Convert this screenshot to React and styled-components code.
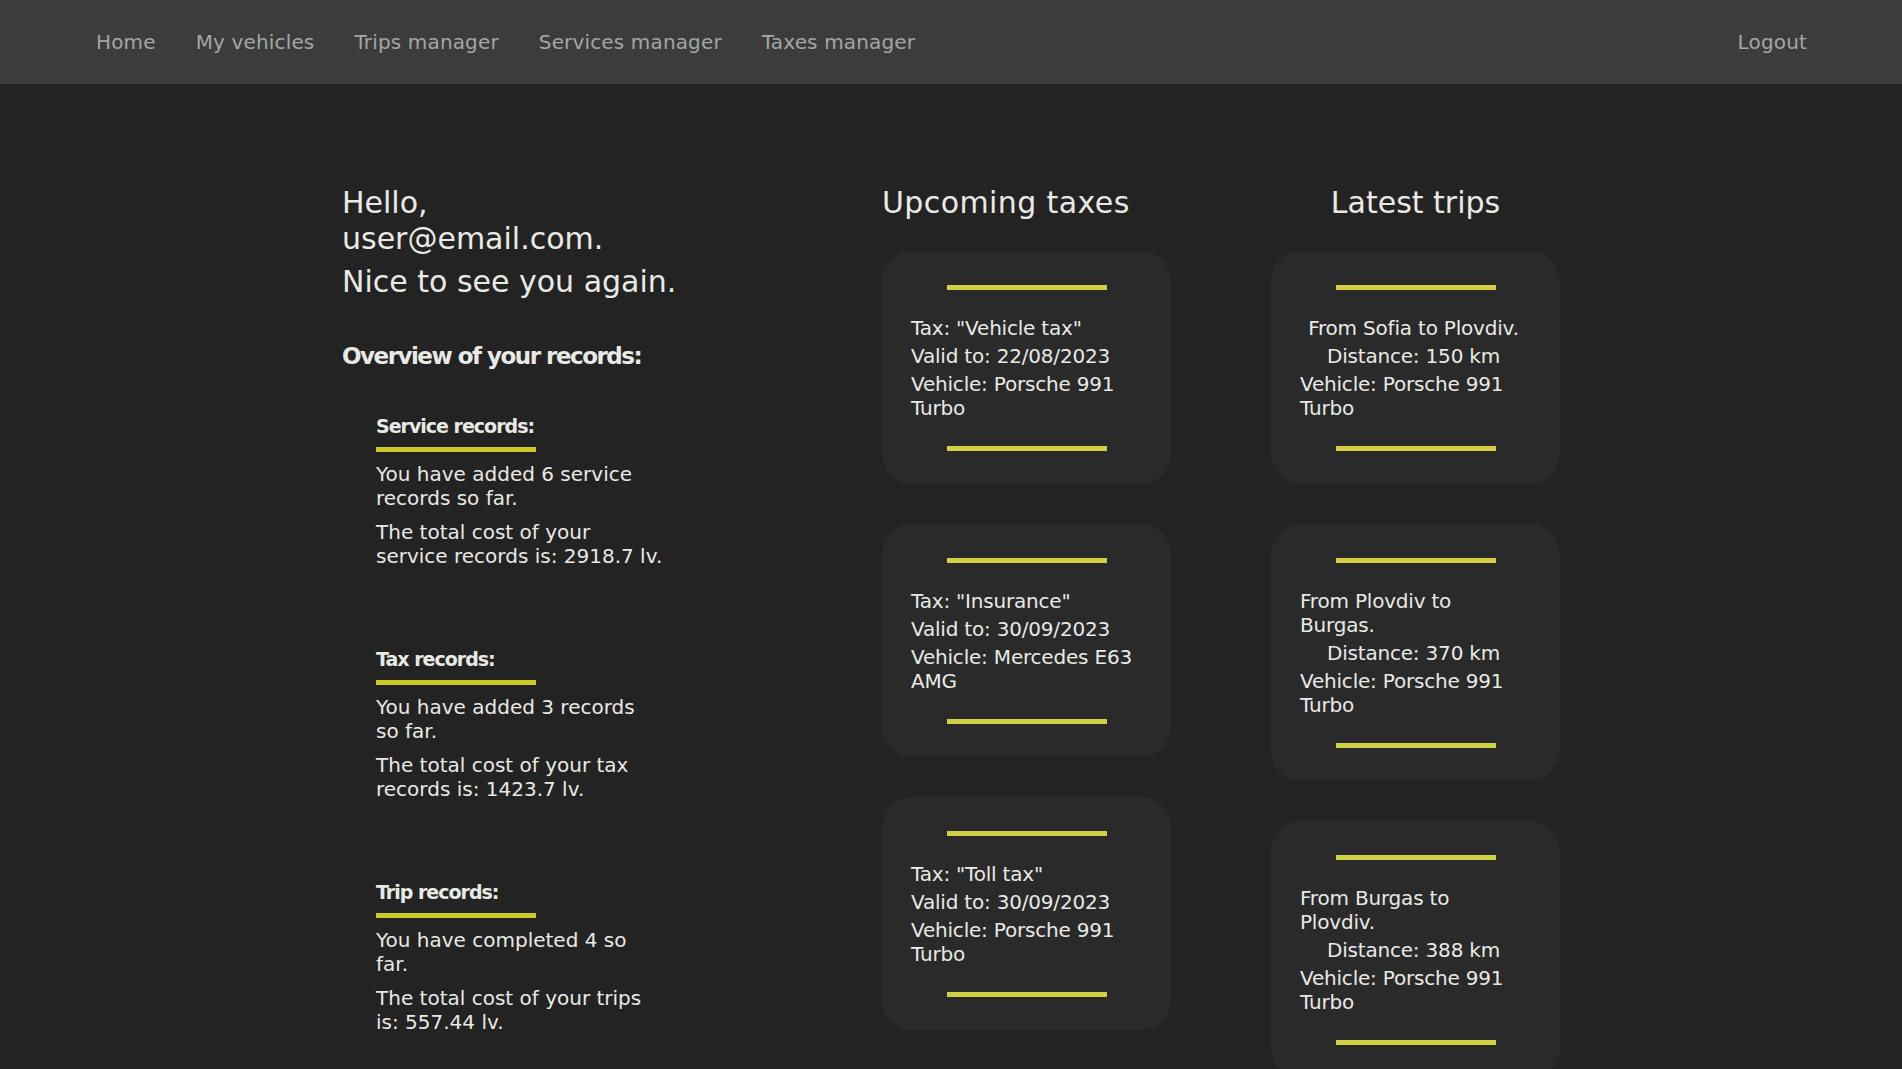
import React from 'react';
import styled, { createGlobalStyle } from 'styled-components';

const GlobalStyle = createGlobalStyle`
  html, body {
    margin: 0;
    padding: 0;
    background: #232323;
    font-family: "DejaVu Sans", "Liberation Sans", sans-serif;
    overflow-x: hidden;
  }
  ::-webkit-scrollbar {
    display: none;
  }
  * {
    box-sizing: border-box;
  }
`;

const Nav = styled.nav`
  height: 84px;
  background: #3c3c3a;
  display: flex;
  align-items: center;
  justify-content: space-between;
  padding: 0 75px 0 76px;
`;

const NavGroup = styled.div`
  display: flex;
  align-items: center;
`;

const NavLink = styled.a`
  color: #a3a6a8;
  font-size: 20px;
  line-height: 24px;
  letter-spacing: 0.15px;
  padding: 0 20px;
  text-decoration: none;
  cursor: pointer;
`;

const Main = styled.main`
  display: grid;
  grid-template-columns: 440px 289px 289px;
  column-gap: 100px;
  justify-content: center;
  padding: 101px 0 60px;
  color: #e9e9e6;
`;

const Column = styled.section`
  display: flex;
  flex-direction: column;
`;

const Greeting = styled.h1`
  font-size: 30px;
  font-weight: 400;
  line-height: 36px;
  margin: 0;
  max-width: 345px;
`;

const SubGreeting = styled.h2`
  font-size: 30px;
  font-weight: 400;
  line-height: 36px;
  margin: 7px 0 0;
`;

const Overview = styled.h3`
  font-size: 23px;
  font-weight: 700;
  letter-spacing: -1.5px;
  line-height: 28px;
  margin: 42px 0 0;
`;

const RecordList = styled.div`
  display: flex;
  flex-direction: column;
  gap: 79px;
  margin-top: 44px;
  padding-left: 34px;
`;

const Record = styled.div`
  width: 276px;
`;

const RecordTitle = styled.h4`
  font-size: 19px;
  font-weight: 700;
  letter-spacing: -1px;
  line-height: 24px;
  margin: 0;
`;

const Bar = styled.div`
  width: 160px;
  height: 5px;
  background: ${(p) => (p.$card ? '#d0d047' : '#c9c927')};
  margin: ${(p) => (p.$card ? '0 auto' : '9px 0 2px')};
`;

const RecordText = styled.p`
  font-size: 20px;
  line-height: 24px;
  margin: 10px 0 0;
`;

const Total = styled.span`
  white-space: nowrap;
`;

const ColumnTitle = styled.h2`
  font-size: 30px;
  font-weight: 400;
  line-height: 36px;
  letter-spacing: ${(p) => p.$spacing || '0'};
  margin: 0 0 30px;
  text-align: ${(p) => p.$align || 'left'};
`;

const CardStack = styled.div`
  display: flex;
  flex-direction: column;
  gap: 40px;
`;

const Card = styled.div`
  background: #2a2a2a;
  border-radius: 30px;
  padding: 34px 29px 33px;
`;

const CardBody = styled.div`
  display: flex;
  flex-direction: column;
  align-items: ${(p) => (p.$center ? 'center' : 'stretch')};
  gap: 4px;
  margin: 26px 4px 26px 0;
`;

const CardLine = styled.p`
  font-size: 20px;
  line-height: 24px;
  letter-spacing: -0.2px;
  margin: 0;
`;

const records = [
  {
    title: 'Service records:',
    added: 'You have added 6 service records so far.',
    cost: 'The total cost of your',
    total: 'service records is: 2918.7 lv.',
  },
  {
    title: 'Tax records:',
    added: 'You have added 3 records so far.',
    cost: 'The total cost of your tax',
    total: 'records is: 1423.7 lv.',
  },
  {
    title: 'Trip records:',
    added: 'You have completed 4 so far.',
    cost: 'The total cost of your trips',
    total: 'is: 557.44 lv.',
  },
];

const taxes = [
  { name: 'Vehicle tax', valid: '22/08/2023', vehicle: 'Porsche 991 Turbo' },
  { name: 'Insurance', valid: '30/09/2023', vehicle: 'Mercedes E63 AMG' },
  { name: 'Toll tax', valid: '30/09/2023', vehicle: 'Porsche 991 Turbo' },
];

const trips = [
  { from: 'Sofia', to: 'Plovdiv', distance: 150, vehicle: 'Porsche 991 Turbo' },
  { from: 'Plovdiv', to: 'Burgas', distance: 370, vehicle: 'Porsche 991 Turbo' },
  { from: 'Burgas', to: 'Plovdiv', distance: 388, vehicle: 'Porsche 991 Turbo' },
];

function App() {
  return (
    <>
      <GlobalStyle />
      <Nav>
        <NavGroup>
          <NavLink>Home</NavLink>
          <NavLink>My vehicles</NavLink>
          <NavLink>Trips manager</NavLink>
          <NavLink>Services manager</NavLink>
          <NavLink>Taxes manager</NavLink>
        </NavGroup>
        <NavGroup>
          <NavLink>Logout</NavLink>
        </NavGroup>
      </Nav>
      <Main>
        <Column>
          <Greeting>Hello, user@email.com.</Greeting>
          <SubGreeting>Nice to see you again.</SubGreeting>
          <Overview>Overview of your records:</Overview>
          <RecordList>
            {records.map((r) => (
              <Record key={r.title}>
                <RecordTitle>{r.title}</RecordTitle>
                <Bar />
                <RecordText>{r.added}</RecordText>
                <RecordText>
                  {r.cost} <Total>{r.total}</Total>
                </RecordText>
              </Record>
            ))}
          </RecordList>
        </Column>
        <Column>
          <ColumnTitle $spacing="0.4px">Upcoming taxes</ColumnTitle>
          <CardStack>
            {taxes.map((t) => (
              <Card key={t.name}>
                <Bar $card />
                <CardBody>
                  <CardLine>Tax: "{t.name}"</CardLine>
                  <CardLine>Valid to: {t.valid}</CardLine>
                  <CardLine>Vehicle: {t.vehicle}</CardLine>
                </CardBody>
                <Bar $card />
              </Card>
            ))}
          </CardStack>
        </Column>
        <Column>
          <ColumnTitle $align="center">Latest trips</ColumnTitle>
          <CardStack>
            {trips.map((t) => (
              <Card key={t.from + t.to}>
                <Bar $card />
                <CardBody $center>
                  <CardLine>From {t.from} to {t.to}.</CardLine>
                  <CardLine>Distance: {t.distance} km</CardLine>
                  <CardLine>Vehicle: {t.vehicle}</CardLine>
                </CardBody>
                <Bar $card />
              </Card>
            ))}
          </CardStack>
        </Column>
      </Main>
    </>
  );
}

export default App;
